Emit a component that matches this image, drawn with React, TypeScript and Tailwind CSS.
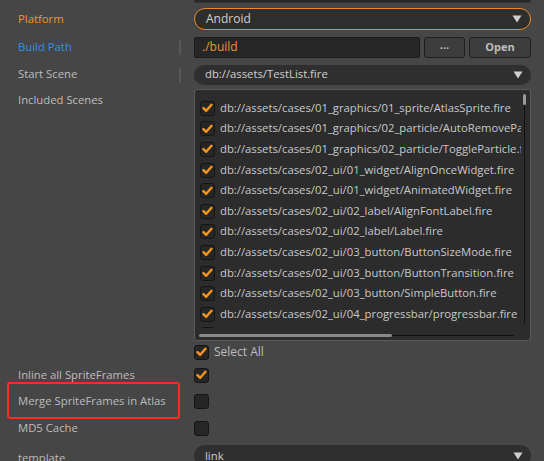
import React from 'react';

const scenes = [
  'db://assets/cases/01_graphics/01_sprite/AtlasSprite.fire',
  'db://assets/cases/01_graphics/02_particle/AutoRemoveParticle.fire',
  'db://assets/cases/01_graphics/02_particle/ToggleParticle.fire',
  'db://assets/cases/02_ui/01_widget/AlignOnceWidget.fire',
  'db://assets/cases/02_ui/01_widget/AnimatedWidget.fire',
  'db://assets/cases/02_ui/02_label/AlignFontLabel.fire',
  'db://assets/cases/02_ui/02_label/Label.fire',
  'db://assets/cases/02_ui/03_button/ButtonSizeMode.fire',
  'db://assets/cases/02_ui/03_button/ButtonTransition.fire',
  'db://assets/cases/02_ui/03_button/SimpleButton.fire',
  'db://assets/cases/02_ui/04_progressbar/progressbar.fire',
  'db://assets/cases/02_ui/05_scrollView/ScrollView.fire',
];

function Checkbox({ checked }: { checked?: boolean }) {
  return (
    <span className="w-[15px] h-[15px] shrink-0 rounded-[3px] bg-[#262626] border border-[#151515] flex items-center justify-center">
      {checked && (
        <svg width="11" height="10" viewBox="0 0 11 10">
          <path d="M1.5 5.2 L4.2 7.8 L9.5 1.8" fill="none" stroke="#f5961e" strokeWidth="2.4" strokeLinecap="round" strokeLinejoin="round" />
        </svg>
      )}
    </span>
  );
}

function Arrow() {
  return (
    <svg width="10" height="8" viewBox="0 0 10 8" className="shrink-0">
      <path d="M0.5 0.5 H9.5 L5 7.5 Z" fill="#cfcfcf" />
    </svg>
  );
}

function Splitter() {
  return <span className="absolute left-[179px] top-[7px] w-[2px] h-[15px] bg-[#575757]" />;
}

export default function App() {
  return (
    <div
      className="w-[544px] h-[461px] overflow-hidden bg-[#464646] text-[11.3px] text-[#bdbdbd]"
      style={{ fontFamily: '"Open Sans", "Noto Sans", sans-serif' }}
    >
      {/* tail of the row above */}
      <div className="flex h-[5px]">
        <div className="ml-[194px] w-[337px] h-[3px] bg-[#282828] rounded-b-[3px] border-b border-[#333]" />
      </div>

      <div className="flex items-center h-[28px]">
        <div className="w-[194px] pl-[18px] text-[#f0952e]">Platform</div>
        <div className="w-[337px] h-[22px] rounded-full border border-[#e88b2a] bg-[#2e2e2e] flex items-center pl-[11px] pr-[8px]">
          <span className="flex-1 text-[#cfcfcf] text-[12px]">Android</span>
          <Arrow />
        </div>
      </div>

      <div className="relative flex items-center h-[28px]">
        <Splitter />
        <div className="w-[194px] pl-[18px] text-[#2e90e8]">Build Path</div>
        <div className="w-[226px] h-[21px] rounded-[2px] bg-[#262626] border border-[#1c1c1c] flex items-center pl-[7px] text-[#f0952e] text-[12px]">./build</div>
        <button className="ml-[4px] w-[41px] h-[21px] rounded-[3px] bg-[#3d3d3d] border border-[#1f1f1f] text-[#bdbdbd] font-bold text-[11px] leading-none">···</button>
        <button className="ml-[4px] w-[62px] h-[21px] rounded-[3px] bg-[#3d3d3d] border border-[#1f1f1f] text-[#bdbdbd] font-bold text-[11px]">Open</button>
      </div>

      <div className="relative flex items-center h-[27px]">
        <Splitter />
        <div className="w-[194px] pl-[18px]">Start Scene</div>
        <div className="w-[337px] h-[20px] rounded-full bg-[#2f2f2f] flex items-center pl-[11px] pr-[8px]">
          <span className="flex-1 text-[#cfcfcf]">db://assets/TestList.fire</span>
          <Arrow />
        </div>
      </div>

      <div className="flex h-[253px] pt-[1px]">
        <div className="w-[194px] pl-[18px] pt-[3px]">Included Scenes</div>
        <div className="relative w-[337px] h-[252px] rounded-[3px] border border-[#5b5b5b] bg-[#2c2c2c] flex flex-col">
          <div className="h-[238px] overflow-hidden pt-[8px] pl-[5px] pr-[9px]">
            {scenes.map((s) => (
              <div key={s} className="flex items-center gap-[5px] h-[20.6px] whitespace-nowrap text-[#c8c8c8]">
                <Checkbox checked />
                <span className="overflow-hidden">{s}</span>
              </div>
            ))}
          </div>
          <div className="flex items-center h-[4px] pl-[4px] mt-[5px]">
            <span className="w-[193px] h-[3px] rounded-full bg-[#8a8a8a]" />
            <span className="w-[122px] h-[1px] bg-[#111]" />
          </div>
          {/* vertical scrollbar */}
          <div className="absolute right-[4px] top-[4px] w-[3px] flex flex-col items-center">
            <span className="w-[3px] h-[11px] rounded-full bg-[#9a9a9a]" />
            <span className="w-[1px] h-[219px] bg-[#111]" />
          </div>
        </div>
      </div>

      <div className="flex items-center h-[20px] mt-[1px]">
        <div className="w-[194px]" />
        <Checkbox checked />
        <span className="ml-[5px] text-[12px]">Select All</span>
      </div>

      <div className="flex items-center h-[26px]">
        <div className="w-[194px] pl-[18px]">Inline all SpriteFrames</div>
        <Checkbox checked />
      </div>

      <div className="relative flex items-center h-[27px]">
        <div className="w-[194px] pl-[18px]">Merge SpriteFrames in Atlas</div>
        <Checkbox />
        <span className="absolute left-[7px] top-[-6px] w-[173px] h-[37px] rounded-[3px] border-2 border-[#ff2b1c]" />
      </div>

      <div className="flex items-center h-[27px]">
        <div className="w-[194px] pl-[18px]">MD5 Cache</div>
        <Checkbox />
      </div>

      <div className="flex items-start h-[30px] pt-[3px]">
        <div className="w-[194px] pl-[18px] pt-[5px]">template</div>
        <div className="w-[337px] h-[22px] rounded-full bg-[#2f2f2f] flex items-center pl-[11px] pr-[8px]">
          <span className="flex-1 text-[#cfcfcf]">link</span>
          <Arrow />
        </div>
      </div>
    </div>
  );
}
